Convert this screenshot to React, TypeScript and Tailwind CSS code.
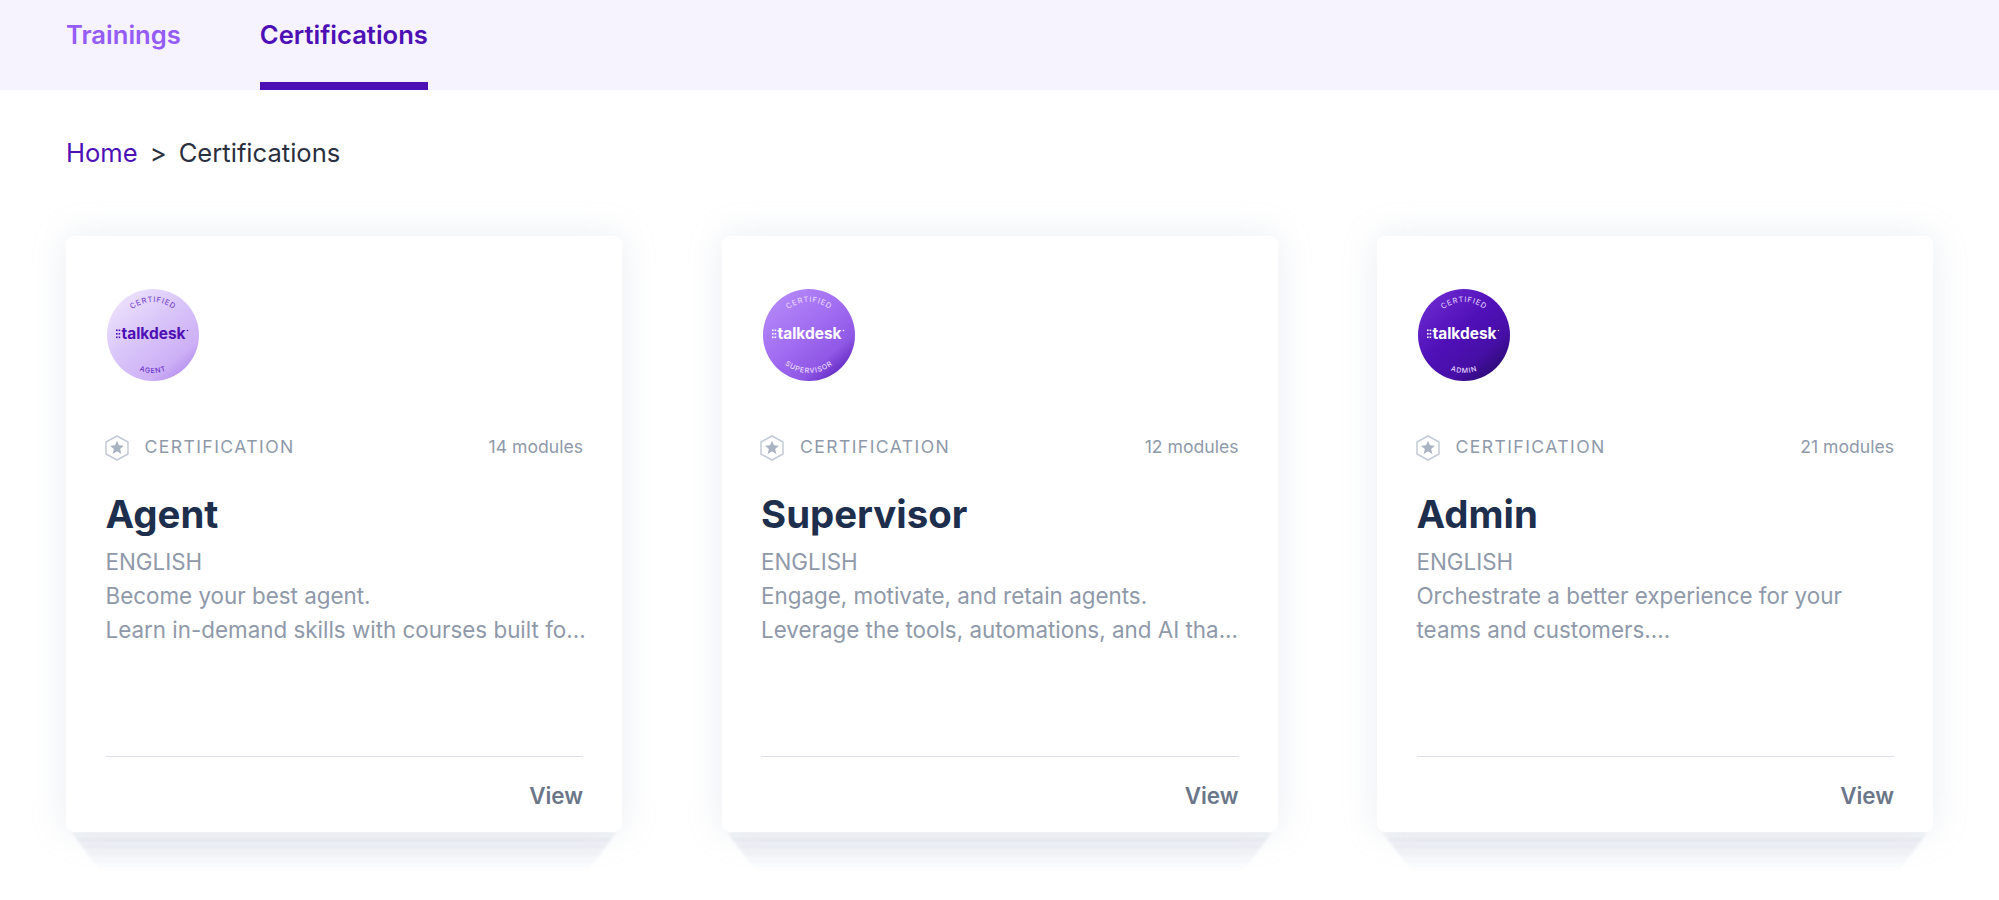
import React from 'react';

interface Cert {
  title: string;
  modules: number;
  lines: string[];
  role: string;
  gradient: string;
  logoColor: string;
  ringColor: string;
}

const certs: Cert[] = [
  {
    title: 'Agent',
    modules: 14,
    lines: ['Become your best agent.', 'Learn in-demand skills with courses built fo...'],
    role: 'AGENT',
    gradient: 'bg-[linear-gradient(140deg,#efe6fc_5%,#d9c5f9_45%,#cdb0f6_75%,#a67ce8_97%)]',
    logoColor: '#4d10b5',
    ringColor: '#6a34c9',
  },
  {
    title: 'Supervisor',
    modules: 12,
    lines: ['Engage, motivate, and retain agents.', 'Leverage the tools, automations, and AI tha...'],
    role: 'SUPERVISOR',
    gradient: 'bg-[linear-gradient(140deg,#b68cf8_5%,#a26ef2_45%,#9058e6_72%,#4c12b0_97%)]',
    logoColor: '#ffffff',
    ringColor: '#ecdfff',
  },
  {
    title: 'Admin',
    modules: 21,
    lines: ['Orchestrate a better experience for your', 'teams and customers....'],
    role: 'ADMIN',
    gradient: 'bg-[linear-gradient(140deg,#6f2dd2_5%,#5010b8_45%,#460fa6_70%,#22075f_97%)]',
    logoColor: '#ffffff',
    ringColor: '#e6d8ff',
  },
];

const Badge: React.FC<{ cert: Cert }> = ({ cert }) => {
  const topId = `top-${cert.role}`;
  const botId = `bot-${cert.role}`;
  return (
    <div className={`w-[92px] h-[92px] rounded-full ml-[1.5px] ${cert.gradient}`}>
      <svg viewBox="0 0 92 92" className="w-full h-full">
        <defs>
          <path id={topId} d="M 13 46 A 33 33 0 0 1 79 46" />
          <path id={botId} d="M 8 46 A 38 38 0 0 0 84 46" />
        </defs>
        <text fontFamily="Inter, sans-serif" fontSize="7.5" letterSpacing="0.8" fill={cert.ringColor} textAnchor="middle">
          <textPath href={`#${topId}`} startOffset="50%">CERTIFIED</textPath>
        </text>
        <text fontFamily="Inter, sans-serif" fontSize="7" fontWeight="500" letterSpacing="0.8" fill={cert.ringColor} textAnchor="middle">
          <textPath href={`#${botId}`} startOffset="50%">{cert.role}</textPath>
        </text>
        <g fill={cert.logoColor}>
          <rect x="9" y="40.5" width="1.6" height="1.6" />
          <rect x="9" y="44" width="1.6" height="1.6" />
          <rect x="9" y="47.5" width="1.6" height="1.6" />
          <rect x="11.6" y="40.5" width="1.6" height="1.6" />
          <rect x="11.6" y="44" width="1.6" height="1.6" />
          <rect x="11.6" y="47.5" width="1.6" height="1.6" />
          <circle cx="80.5" cy="41.5" r="0.8" />
        </g>
        <text
          x="14.5"
          y="50"
          fontFamily="Inter, sans-serif"
          fontSize="15.5"
          fontWeight="700"
          textLength="64"
          lengthAdjust="spacingAndGlyphs"
          fill={cert.logoColor}
        >
          talkdesk
        </text>
      </svg>
    </div>
  );
};

const HexStar = () => (
  <svg viewBox="0 0 24 26" className="w-[24px] h-[26px] -ml-[1px]">
    <path d="M12 1 L23 7 V19 L12 25 L1 19 V7 Z" fill="none" stroke="#c3cad6" strokeWidth="1.5" strokeLinejoin="round" />
    <path d="M12 5.7 L13.94 10.33 L18.9 10.7 L15.14 14.02 L16.3 18.9 L12 16.3 L7.7 18.9 L8.86 14.02 L5.1 10.7 L10.06 10.33 Z" fill="#a9b2c1" />
  </svg>
);

const Card: React.FC<{ cert: Cert }> = ({ cert }) => (
  <div className="relative h-[596px]">
    {/* stacked sheets peeking out below the card */}
    <div className="absolute top-full left-[5px] right-[5px] h-[40px] blur-[1px]">
      <div className="h-full [clip-path:polygon(0_0,100%_0,calc(100%-30px)_100%,30px_100%)] bg-[linear-gradient(#f4f6f9_0,#f3f5f8_6px,#e9ecf2_7px,#f3f5f8_12px,#ebeef3_14px,#f5f6f9_19px,#f0f2f6_21px,#f8f9fb_26px,#f7f8fa_28px,#ffffff_40px)]" />
    </div>
    <div className="relative h-full bg-white rounded-lg shadow-[0_0_36px_rgba(148,163,190,0.2)] flex flex-col pt-[53px] pl-[39.5px] pr-[39px] pb-[21px]">
      <Badge cert={cert} />
      <div className="mt-[54px] flex items-center h-[25px]">
        <HexStar />
        <span className="ml-[16px] text-[17.6px] tracking-[0.08em] text-[#8f99aa]">CERTIFICATION</span>
        <span className="ml-auto text-[17.6px] text-[#8f99aa]">{cert.modules} modules</span>
      </div>
      <h2 className="mt-[31px] text-[38.4px] leading-[46px] font-bold text-[#1e2f4d]">{cert.title}</h2>
      <div className="mt-[8px] text-[22.4px] leading-[34px] text-[#8f99aa]">
        <div>ENGLISH</div>
        {cert.lines.map((line) => (
          <div key={line} className="whitespace-nowrap">{line}</div>
        ))}
      </div>
      <div className="mt-auto border-t border-[#dcdfe5] pt-[24px] flex justify-end">
        <a className="text-[22.4px] leading-[30px] font-semibold text-[#6b7689]">View</a>
      </div>
    </div>
  </div>
);

export default function App() {
  return (
    <div className="h-[900px] overflow-hidden bg-white font-['Inter',sans-serif]">
      <nav className="h-[90px] bg-[#f6f2fe] flex gap-[79px] px-[66px]">
        <a className="pt-[16px] text-[25.6px] font-semibold text-[#955df7]">Trainings</a>
        <a className="pt-[16px] text-[25.6px] font-semibold text-[#4c10b4] border-b-[8px] border-[#4c10b4]">Certifications</a>
      </nav>
      <div className="mt-[47px] px-[66px] text-[25.6px] leading-[32px] flex gap-[12px] text-[#2b3040]">
        <a className="text-[#4c10b4]">Home</a>
        <span>&gt;</span>
        <span>Certifications</span>
      </div>
      <div className="mt-[67px] px-[66px] grid grid-cols-3 gap-[99.5px]">
        {certs.map((cert) => (
          <Card key={cert.title} cert={cert} />
        ))}
      </div>
    </div>
  );
}
